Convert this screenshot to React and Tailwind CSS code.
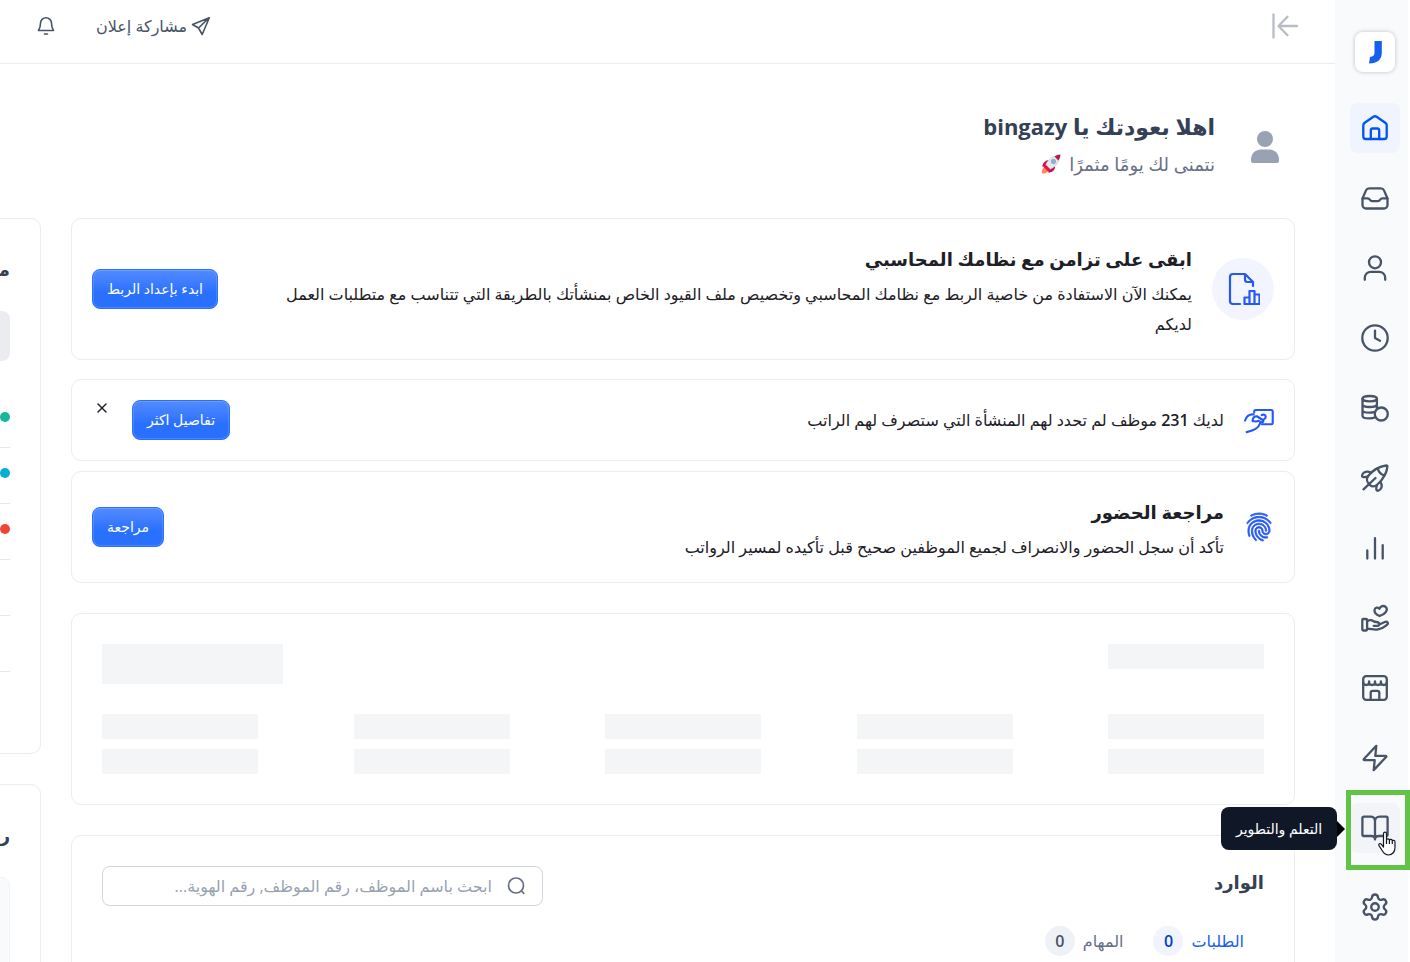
import { Settings, X } from "lucide-react";
import { IoFingerPrintOutline } from "react-icons/io5";

function Icon({ children, className = "size-7" }) {
  return (
    <svg
      viewBox="0 0 28 28"
      fill="none"
      stroke="currentColor"
      strokeWidth="2.3"
      strokeLinecap="round"
      strokeLinejoin="round"
      className={className}
      aria-hidden="true"
    >
      {children}
    </svg>
  );
}

const navItems = [
  {
    label: "الرئيسية",
    active: true,
    icon: (
      <Icon>
        <path d="M2.3 11.3c0-1.1.5-2 1.4-2.6l8.7-5.9a2.8 2.8 0 0 1 3.2 0l8.7 5.900c.9.6 1.400 1.500 1.400 2.600V22.500a2.500 2.500 0 0 1-2.500 2.500h-18.400a2.500 2.500 0 0 1-2.500-2.500z" />
        <path d="M9.800 25v-8.500a2 2 0 0 1 2-2h4.400a2 2 0 0 1 2 2V25" />
      </Icon>
    ),
  },
  {
    label: "الوارد",
    icon: (
      <Icon>
        <path d="M1.500 14.500 5 6.400A3.500 3.500 0 0 1 8.200 4.300h11.600A3.500 3.500 0 0 1 23 6.400l3.500 8.100V21a3.500 3.500 0 0 1-3.500 3.500H5A3.500 3.500 0 0 1 1.500 21z" />
        <path d="M1.700 14.400h4.800c1.200 0 1.900.5 2.400 1.400s1.200 1.400 2.300 1.400h5.600c1.100 0 1.800-.5 2.300-1.400s1.200-1.400 2.400-1.400h4.800" />
      </Icon>
    ),
  },
  {
    label: "الموظفين",
    icon: (
      <Icon>
        <circle cx="14" cy="8.300" r="6" />
        <path d="M3.800 25.800v-2a6 6 0 0 1 6-6h8.400a6 6 0 0 1 6 6v2" />
      </Icon>
    ),
  },
  {
    label: "الحضور",
    icon: (
      <Icon>
        <circle cx="14" cy="14" r="12.700" />
        <path d="M14 6.600V14l5 2.700" />
      </Icon>
    ),
  },
  {
    label: "الرواتب",
    icon: (
      <Icon>
        <ellipse cx="8.700" cy="4.700" rx="7.200" ry="2.700" />
        <path d="M1.500 4.700v17c0 1.600 3 2.700 7 2.700 2 0 3.800-.3 5-.9M15.900 4.700v9.500M1.500 10.400c0 1.500 3.200 2.600 7.200 2.600s7.200-1.100 7.200-2.600M1.500 16c0 1.600 3 2.700 7 2.700 1.700 0 3.200-.2 4.400-.5" />
        <circle cx="20.300" cy="20" r="6.500" />
      </Icon>
    ),
  },
  {
    label: "الانطلاق",
    icon: (
      <Icon>
        <path d="M7.300 11.800c5.200-6.200 10.300-9.300 18-10.300.8-.1 1.200.4 1.100 1.100-.8 7.500-4 12.400-10 17.900-2.900 2.600-5.600 2.200-7.700.3-2.500-2.200-3.800-6-1.400-9z" />
        <path d="M16.800 4.800c1 3.200 2.700 5.200 6.300 6.600M14.500 14 2.500 25.300M7 12.500c-2 .2-3.600 1-5 .5-1.600-.5-1-3.400 1.500-4.700 2-1 4.600-.7 6.600.5M15.800 21.200c-.4 2-1 3.700-.2 5 .6 1 3.300.5 4.600-2.100.9-2 .3-4.400-.9-6.200" />
      </Icon>
    ),
  },
  {
    label: "التقارير",
    icon: (
      <Icon>
        <path d="M6.300 16.500v8M14 4.200v20.300M21.700 11.200v13.300" />
      </Icon>
    ),
  },
  {
    label: "المزايا",
    icon: (
      <Icon>
        <rect x="1.300" y="15" width="4.800" height="11.500" rx="1" />
        <path d="M6 17.200c2.200-1.300 4.500-1.500 6.200-.2 1 .7 1.900 1 3.200 1 3.200 0 4 3.600.8 3.800h-3.500M18.300 20.500l5.500-2.500c2.500-1.100 4 1.300 2.200 2.900-2.500 2.200-5.600 3.900-9 4.500-4 .8-7-.8-11-.8" />
        <path d="M18.600 12c-3-1.300-5.300-3.200-5.100-5.900.2-2.700 3.600-3.300 5-1.300.7-2.600 4.200-3.700 6.100-1.900 1.500 1.400 1.200 3.800 0 5.400-1.400 1.900-3.500 3-6 3.700z" />
      </Icon>
    ),
  },
  {
    label: "المتجر",
    icon: (
      <Icon>
        <rect x="2.200" y="2.200" width="23.600" height="23.600" rx="3" />
        <path d="M2.200 8.300c0 3.600 5.900 3.600 5.900 0 0 3.600 5.900 3.600 5.900 0 0 3.600 5.900 3.600 5.900 0 0 3.600 5.900 3.600 5.900 0M8.100 7.300v1M14 7.300v1M19.900 7.300v1M9.700 25.800v-7a2 2 0 0 1 2-2h4.600a2 2 0 0 1 2 2v7" />
      </Icon>
    ),
  },
  {
    label: "الأتمتة",
    icon: (
      <Icon>
        <path d="M15.300 1.800 2.900 15c-.5.600-.2 1.100.5 1.100h10.300l-1 10L25.100 13c.5-.6.200-1.100-.5-1.100H14.300z" />
      </Icon>
    ),
  },
  {
    label: "التعلم والتطوير",
    hovered: true,
    icon: (
      <Icon>
        <path d="M14 7.200C14 4.400 12 2.700 9.300 2.700H2.900c-.9 0-1.500.6-1.500 1.500v16.300c0 .9.600 1.500 1.500 1.500H10c2.400 0 4 1.200 4 3.500zM14 7.200c0-2.800 2-4.500 4.700-4.500h6.400c.9 0 1.500.6 1.500 1.500v16.300c0 .9-.6 1.500-1.500 1.500H18c-2.400 0-4 1.200-4 3.500" />
      </Icon>
    ),
  },
];

function HandCursor() {
  return (
    <svg
      viewBox="0 0 18 25"
      className="absolute left-7 top-7 z-20 h-[25px] w-[18px]"
      fill="#fff"
      stroke="#111827"
      strokeWidth="1.2"
      strokeLinejoin="round"
      aria-hidden="true"
    >
      <path d="M5.500 16V2.800c0-2.200 3-2.200 3 0V9c.2-1.600 2.800-1.500 2.900.3.300-1.300 2.800-1.200 2.900.6.400-1 2.700-.8 2.700 1.100v5.500c0 4-2.500 7.500-6.500 7.500-3.700 0-5-2-6.500-4.700L1 14.600c-.8-1.600 1-2.700 2.200-1.400z" />
      <path d="M8.500 9v4M11.400 9.300V13M14.300 10v3" />
    </svg>
  );
}

function NavItem({ item }) {
  return (
    <li className="relative">
      <a
        href="#"
        aria-label={item.label}
        className={`flex size-[50px] items-center justify-center rounded-lg ${
          item.active
            ? "bg-[#eff4ff] text-[#0054f0]"
            : item.hovered
              ? "bg-[#f2f4f7] text-[#475467]"
              : "text-[#475467]"
        }`}
      >
        {item.icon}
      </a>
      {item.hovered && (
        <>
          <span className="absolute -bottom-[17px] -left-1 -right-2.5 -top-[13px] border-5 border-[#62c346]" />
          <span
            role="tooltip"
            className="absolute right-[63px] top-1 z-10 flex h-[43px] w-[116px] items-center justify-center whitespace-nowrap rounded-lg bg-[#101828] text-sm font-medium text-white"
          >
            {item.label}
            <span className="absolute left-full top-1/2 -translate-y-1/2 border-y-8 border-l-8 border-y-transparent border-l-black" />
          </span>
          <HandCursor />
        </>
      )}
    </li>
  );
}

function Sidebar() {
  return (
    <nav className="w-[75px] shrink-0 border-r-2 border-white bg-[#f9fafc] pl-[15px] pr-2 pt-8">
      <a
        href="#"
        aria-label="الصفحة الرئيسية"
        className="mx-auto flex size-10 items-center justify-center rounded-lg bg-white shadow-[0_0_4px_rgba(16,24,40,0.25)]"
      >
        <svg viewBox="0 0 13 23" className="h-[23px] w-[13px]" fill="#155eef">
          <path d="M5.500 0h7.300v11.500C12.800 18.500 8.500 22.500 0 22.500l1-6.600c3.300 0 4.500-1.600 4.500-4.400z" />
        </svg>
      </a>
      <ul className="mt-[31px] flex flex-col gap-5">
        {navItems.map((item) => (
          <NavItem key={item.label} item={item} />
        ))}
      </ul>
      <a
        href="#"
        aria-label="الإعدادات"
        className="mt-[29px] flex size-[50px] items-center justify-center text-[#475467]"
      >
        <Settings className="size-[30px]" strokeWidth={1.9} />
      </a>
    </nav>
  );
}

function Header() {
  return (
    <header className="flex h-16 items-center border-b border-[#eaecee] px-9 pb-3 text-[#475467]">
      <button type="button" aria-label="طي القائمة" className="text-[#b8bcc6]">
        <Icon>
          <path d="M2.500 2.500v23M26 14H8M16.500 4.800 7.500 14l9 9.200" />
        </Icon>
      </button>
      <button type="button" className="mr-auto flex items-center gap-1 text-base">
        <svg
          viewBox="0 0 20 20"
          className="size-5"
          fill="none"
          stroke="currentColor"
          strokeWidth="1.6"
          strokeLinejoin="round"
          aria-hidden="true"
        >
          <path d="M18.300 1.700 1.500 8.500l6 3.500zM18.300 1.700 7.500 12l3.700 6.500zM18.300 1.700 7.500 12" />
        </svg>
        مشاركة إعلان
      </button>
      <button type="button" aria-label="الإشعارات" className="mr-10">
        <svg
          viewBox="0 0 20 20"
          className="size-5"
          fill="none"
          stroke="currentColor"
          strokeWidth="1.600"
          strokeLinecap="round"
          strokeLinejoin="round"
          aria-hidden="true"
        >
          <path d="M10 1.800a5.500 5.500 0 0 0-5.500 5.500c0 4.200-1 5.700-2 7.200h15c-1-1.500-2-3-2-7.200A5.500 5.500 0 0 0 10 1.800zM8.500 18h3" />
        </svg>
      </button>
    </header>
  );
}

function Rocket() {
  return (
    <svg viewBox="0 0 20 20" className="size-5" role="img" aria-label="🚀">
      <path d="M1 19.500c-.3-3 .2-5 2.500-6.500l4 3.500C6 19 4 19.500 1 19.500z" fill="#ff8a50" />
      <path d="M7.500 6C4 6.500 2 9 1.200 12.500L6 13zM14 12.500c.3 3.500-2.500 5.500-6.500 6.300l-.5-5z" fill="#ca0b4a" />
      <path d="M4.500 11C6.500 5.500 12 1.500 19 1c-.5 7-4.500 12-10 14.500z" fill="#e6e7ea" stroke="#a8acb8" strokeWidth=".4" />
      <path d="M13.500 2.400C15.500 1.200 17.500.8 19.500.5c-.3 2-.8 4-2.100 6z" fill="#ca0b4a" />
      <path d="M4.500 10.500 9.500 15.500 7 17.500l-4.500-4.500z" fill="#f70a4d" />
      <circle cx="12.500" cy="7.500" r="2.200" fill="#83b8d8" stroke="#5b8db0" strokeWidth=".5" />
    </svg>
  );
}

function Card({ className = "", children }) {
  return (
    <section className={`rounded-[10px] border border-[#eaecee] ${className}`}>
      {children}
    </section>
  );
}

function PrimaryButton({ className, children }) {
  return (
    <button
      type="button"
      className={`h-10 shrink-0 whitespace-nowrap rounded-lg border border-[#2970ff] bg-linear-to-b from-[#528bff] to-[#2970ff] to-60% text-sm font-medium text-white shadow-[inset_0_0_0_1px_rgba(255,255,255,0.15)] ${className}`}
    >
      {children}
    </button>
  );
}

function Greeting() {
  return (
    <div className="flex h-[154px] items-start gap-9 pr-4 pt-11">
      <svg viewBox="0 0 28 32" className="mt-[23px] h-8 w-7" fill="#98a2b3" aria-hidden="true">
        <circle cx="14" cy="8" r="8" />
        <path d="M0 30v-1.500C0 22 5 18.500 10 18.500h8c5 0 10 3.500 10 10V30a2 2 0 0 1-2 2H2a2 2 0 0 1-2-2z" />
      </svg>
      <div>
        <h1 className="text-[22px]/9 font-bold text-[#344054]">
          اهلا بعودتك يا bingazy
        </h1>
        <p className="flex items-center gap-2 text-lg/10 text-[#667085]">
          نتمنى لك يومًا مثمرًا
          <Rocket />
        </p>
      </div>
    </div>
  );
}

function AccountingCard() {
  return (
    <Card className="mb-[19px] flex items-center gap-5 p-5">
      <span className="flex size-[62px] shrink-0 items-center justify-center rounded-full bg-[#f2f5ff] text-[#2558f5]">
        <svg
          viewBox="0 0 34 34"
          className="size-[34px]"
          fill="none"
          stroke="currentColor"
          strokeWidth="2.2"
          strokeLinecap="round"
          strokeLinejoin="round"
          aria-hidden="true"
        >
          <path d="M14 32H7a3 3 0 0 1-3-3V5a3 3 0 0 1 3-3h12l8 8v4M19 2v5.500a2.500 2.500 0 0 0 2.500 2.500H27" />
          <path d="M18.500 25.500h5V32h-5zM23.500 19h5v13h-5zM28.500 22.500h5V32h-5z" />
        </svg>
      </span>
      <div className="min-w-0 flex-1 pl-4">
        <h2 className="text-lg/10 font-bold">ابقى على تزامن مع نظامك المحاسبي</h2>
        <p className="text-base/[30px]">
          يمكنك الآن الاستفادة من خاصية الربط مع نظامك المحاسبي وتخصيص ملف القيود
          الخاص بمنشأتك بالطريقة التي تتناسب مع متطلبات العمل لديكم
        </p>
      </div>
      <PrimaryButton className="w-[126px]">ابدء بإعداد الربط</PrimaryButton>
    </Card>
  );
}

function EmployeesCard() {
  return (
    <Card className="mb-2.5 flex items-center gap-5 p-5">
      <Icon className="size-[30px] shrink-0 text-[#2558f5]">
        <path d="M9.500 7V6c0-.8.600-1.300 1.300-1.300h14.700c.8 0 1.300.5 1.300 1.300v10.700c0 .8-.5 1.300-1.300 1.300h-9" strokeWidth="2" />
        <path d="M1 14.500C2.500 10 5 8.300 9 8.800M8 15c0-2.700 1.500-4.500 4-4.500l5.500 3.500c1.500 1-.2 2.700-1.500 2l-2.500-1.200c-1.500 1-3 .8-5.500.2M15 17c-1.500 5-5.500 6.500-12.500 8.300M16.500 9.500c1.300-1 3.800-.5 3.800 1.500 0 1-.5 1.500-1.300 2" strokeWidth="2" />
      </Icon>
      <p className="flex-1 text-base/[30px]">
        لديك <span className="font-semibold">231</span> موظف لم تحدد لهم المنشأة
        التي ستصرف لهم الراتب
      </p>
      <PrimaryButton className="w-[98px]">تفاصيل اكثر</PrimaryButton>
      <button
        type="button"
        aria-label="إغلاق"
        className="flex h-4 w-5 items-center justify-center self-start"
      >
        <X className="size-4" />
      </button>
    </Card>
  );
}

function AttendanceCard() {
  return (
    <Card className="mb-[30px] flex items-center gap-5 p-5">
      <IoFingerPrintOutline
        className="size-[30px] shrink-0 stroke-[#2558f5] text-[#2558f5] [stroke-width:14px]"
        aria-hidden="true"
      />
      <div className="flex-1">
        <h2 className="text-lg/10 font-bold">مراجعة الحضور</h2>
        <p className="text-base/[30px]">
          تأكد أن سجل الحضور والانصراف لجميع الموظفين صحيح قبل تأكيده لمسير الرواتب
        </p>
      </div>
      <PrimaryButton className="w-[72px]">مراجعة</PrimaryButton>
    </Card>
  );
}

function SkeletonCard() {
  return (
    <Card className="mb-[30px] p-[30px]">
      <div className="flex items-start justify-between">
        <span className="h-[25px] w-[156px] bg-[#f4f5f7]" />
        <span className="h-10 w-[181px] bg-[#f4f5f7]" />
      </div>
      <div className="mt-[30px] flex justify-between">
        {[1, 2, 3, 4, 5].map((n) => (
          <div key={n} className="flex w-[156px] flex-col gap-2.5">
            <span className="h-[25px] bg-[#f4f5f7]" />
            <span className="h-[25px] bg-[#f4f5f7]" />
          </div>
        ))}
      </div>
    </Card>
  );
}

function InboxCard() {
  return (
    <Card className="p-[30px]">
      <div className="flex items-start justify-between">
        <h2 className="text-lg/8 font-bold text-[#344054]">الوارد</h2>
        <label className="flex h-10 w-[441px] items-center gap-3.5 rounded-lg border border-[#d0d5dd] px-4">
          <svg
            viewBox="0 0 20 20"
            className="size-5 shrink-0 text-[#667085]"
            fill="none"
            stroke="currentColor"
            strokeWidth="1.700"
            strokeLinecap="round"
            aria-hidden="true"
          >
            <circle cx="10" cy="9.500" r="7.500" />
            <path d="m15.500 15 2.300 2.300" />
          </svg>
          <input
            type="search"
            aria-label="بحث"
            placeholder="ابحث باسم الموظف، رقم الموظف, رقم الهوية..."
            className="min-w-0 flex-1 text-base outline-none placeholder:text-[#98a2b3]"
          />
        </label>
      </div>
      <div className="mt-5 flex gap-[30px] pr-5 text-base">
        <button type="button" className="flex items-center gap-2 text-[#155eef]">
          الطلبات
          <span className="flex size-[30px] items-center justify-center rounded-full bg-[#eff4ff] font-semibold text-[#0040c1]">
            0
          </span>
        </button>
        <button type="button" className="flex items-center gap-2 text-[#667085]">
          المهام
          <span className="flex size-[30px] items-center justify-center rounded-full bg-[#eef1f6] font-semibold text-[#475467]">
            0
          </span>
        </button>
      </div>
    </Card>
  );
}

function StatusRow({ color }) {
  return (
    <li className="flex h-14 items-center border-b border-[#e4e7ec] pb-1.5">
      {color && <span className={`size-2.5 rounded-full ${color}`} />}
    </li>
  );
}

// Runs past the window's left edge, so only its first few pixels show.
function SideColumn() {
  return (
    <aside className="flex w-[400px] flex-col gap-[30px]">
      <Card className="h-[536px] p-[30px]">
        <h2 className="text-lg/10 font-bold text-[#344054]">مـ</h2>
        <div className="mt-[22px] h-[50px] rounded-lg bg-[#eaecf0]" />
        <ul className="mt-[31px]">
          <StatusRow color="bg-[#15b79e]" />
          <StatusRow color="bg-[#06aed4]" />
          <StatusRow color="bg-[#f04438]" />
          <StatusRow />
          <StatusRow />
        </ul>
      </Card>
      <Card className="p-[30px]">
        <h2 className="text-lg/10 font-bold text-[#344054]">رو</h2>
        <div className="mt-[22px] h-[200px] rounded-lg border border-[#f2f4f7] bg-[#f9fafb]" />
      </Card>
    </aside>
  );
}

export default function App() {
  return (
    <div
      dir="rtl"
      className="flex h-screen overflow-hidden bg-white font-['Open_Sans','DejaVu_Sans',sans-serif] text-[#1d2026]"
    >
      <Sidebar />
      <div className="min-w-0 flex-1">
        <Header />
        <main className="grid grid-cols-[minmax(0,1fr)_41px] gap-x-[30px] pr-10">
          <div className="col-span-2">
            <Greeting />
          </div>
          <div>
            <AccountingCard />
            <EmployeesCard />
            <AttendanceCard />
            <SkeletonCard />
            <InboxCard />
          </div>
          <SideColumn />
        </main>
      </div>
    </div>
  );
}
